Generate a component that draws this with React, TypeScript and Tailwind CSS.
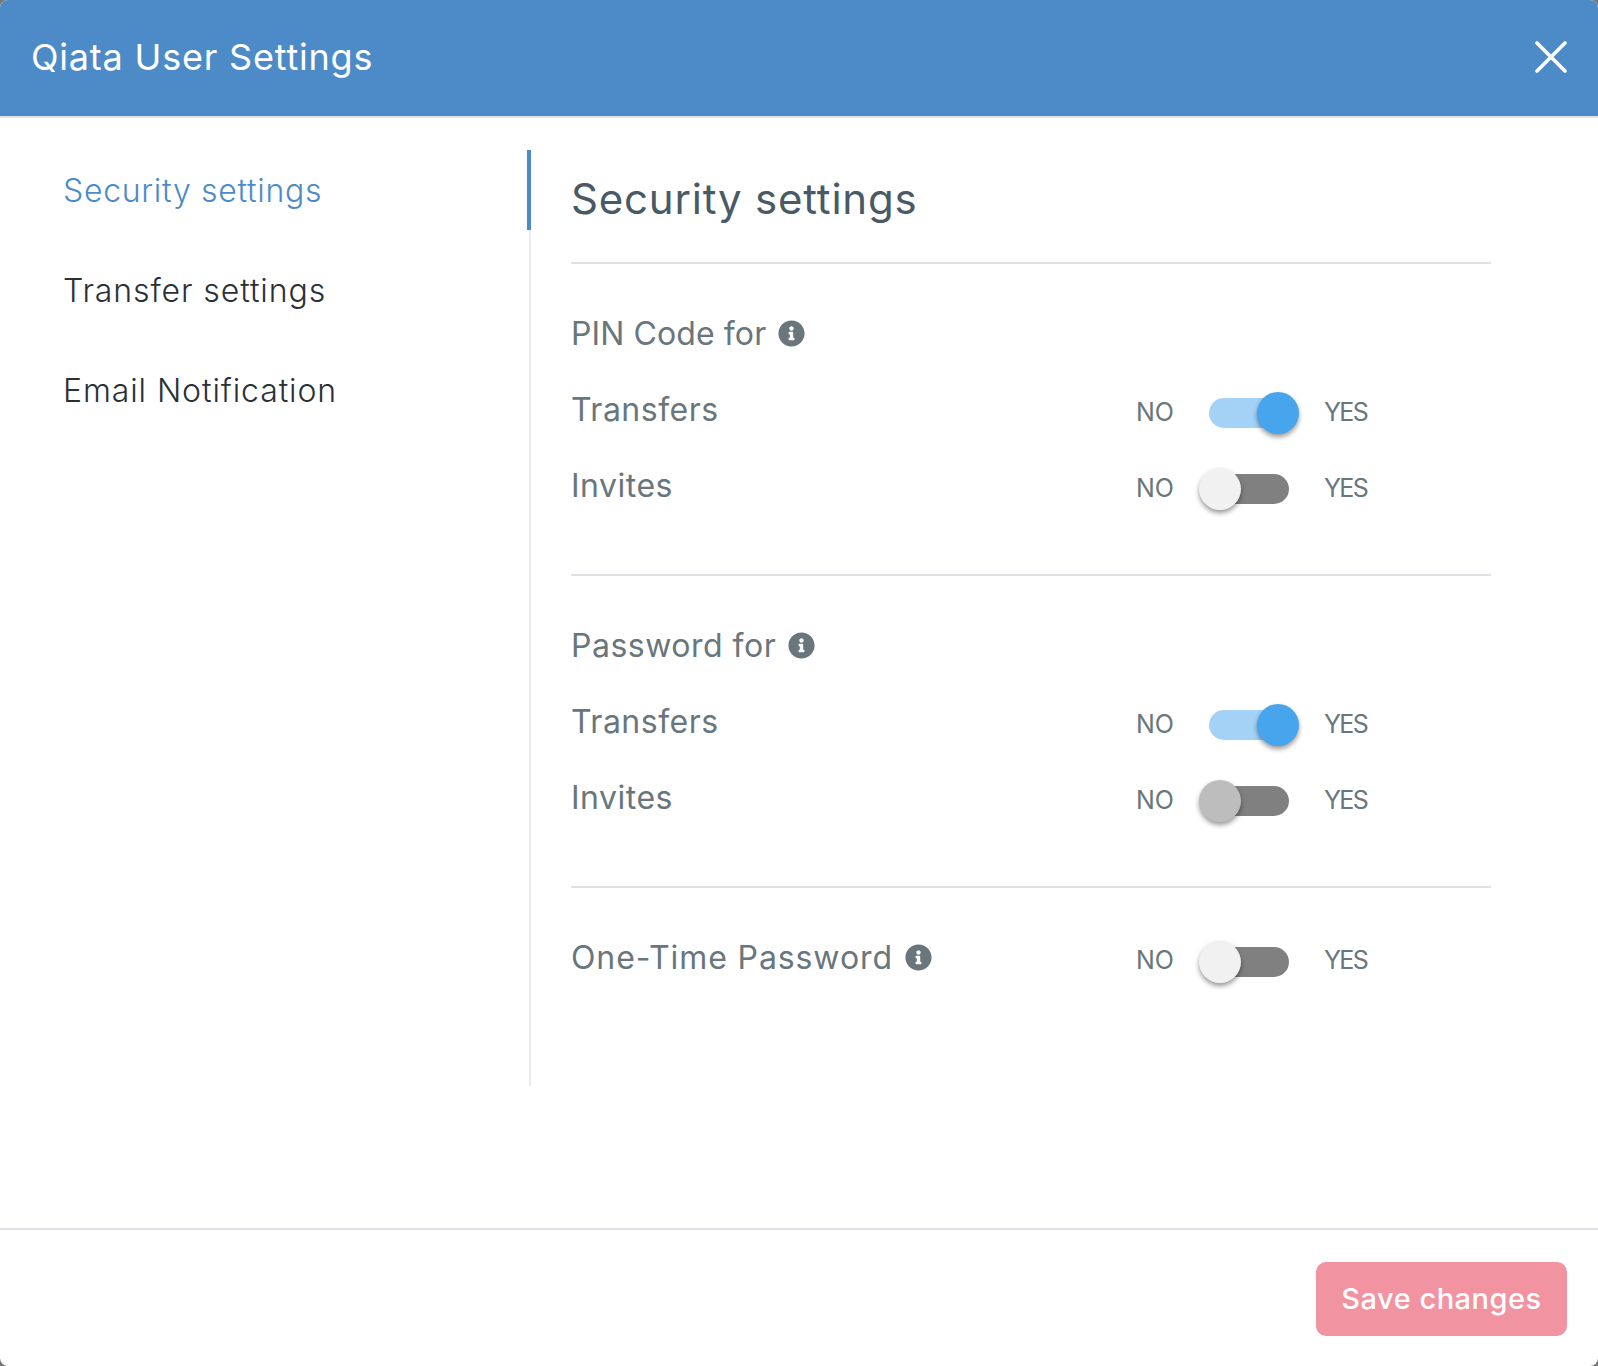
import { FaInfoCircle } from "react-icons/fa";

const font = "font-['Inter','Liberation_Sans',sans-serif]";

function Toggle({ on, dim }: { on?: boolean; dim?: boolean }) {
  return (
    <div className="flex items-center h-[42px] text-[25px] leading-[30px] text-[#69767c]">
      <span className="w-[73px] mt-[-3px] tracking-[-0.1px]">NO</span>
      <div className={`relative w-[80px] h-[30px] rounded-full ${on ? "bg-[#a3d2f6]" : "bg-[#808080]"}`}>
        <div
          className={`absolute top-[-6px] w-[42px] h-[42px] rounded-full shadow-[0_3px_5px_rgba(0,0,0,0.4)] ${
            on ? "left-[48px] bg-[#47a5ee]" : dim ? "left-[-10px] bg-[#bdbdbd]" : "left-[-10px] bg-[#f1f1f1]"
          }`}
        />
      </div>
      <span className="ml-[35px] mt-[-3px] tracking-[-1.6px]">YES</span>
    </div>
  );
}

function Row({ label, on, dim }: { label: string; on?: boolean; dim?: boolean }) {
  return (
    <div className="flex items-center h-[42px]">
      <div className="w-[565px] text-[32px] leading-[42px] tracking-[0.5px] text-[#69767c] font-normal mt-[-7px]">{label}</div>
      <Toggle on={on} dim={dim} />
    </div>
  );
}

function Title({ children, tracking }: { children: string; tracking: string }) {
  return (
    <div className="flex items-center gap-[12px] text-[32px] leading-[36px] text-[#69767c]">
      <span className={tracking}>{children}</span>
      <FaInfoCircle className="w-[27px] h-[27px] mt-[-2px]" />
    </div>
  );
}

function Section({ title, tracking, dim }: { title: string; tracking: string; dim?: boolean }) {
  return (
    <section className="h-[312px] border-t-2 border-[#dee2e6] pt-[52px]">
      <Title tracking={tracking}>{title}</Title>
      <div className="mt-[40px] flex flex-col gap-[34px]">
        <Row label="Transfers" on />
        <Row label="Invites" dim={dim} />
      </div>
    </section>
  );
}

export default function App() {
  return (
    <div className={`w-[1598px] h-[1366px] bg-[#777777] ${font}`}>
      <div className="w-full h-full bg-white rounded-[8px] overflow-hidden flex flex-col">
        <header className="h-[118px] shrink-0 bg-[#4c8bc7] border-b-2 border-[#e3e3e3] flex items-center justify-between pl-[31px] pr-[31px]">
          <h1 className="text-[36px] leading-[44px] tracking-[0.8px] text-white font-normal mt-[-2px]">Qiata User Settings</h1>
          <svg className="mt-[-2px]" width="32" height="32" viewBox="0 0 32 32" fill="none" stroke="white" strokeWidth="3.6" strokeLinecap="round">
            <path d="M2 2L30 30M30 2L2 30" />
          </svg>
        </header>
        <div className="flex h-[1112px] shrink-0 pt-[32px] border-b-2 border-[#dee2e6]">
          <nav className="w-[531px] h-[936px] shrink-0 border-r-2 border-[#e9ecef] text-[32px] font-light text-[#2a3036]">
            <div className="h-[80px] mr-[-2px] border-r-4 border-[#4c8bc7] pl-[63px] pt-[20px] leading-[42px] tracking-[0.7px] text-[#4c8bc7]">Security settings</div>
            <div className="h-[80px] mt-[20px] pl-[63px] pt-[20px] leading-[42px] tracking-[0.9px]">Transfer settings</div>
            <div className="h-[80px] mt-[20px] pl-[63px] pt-[20px] leading-[42px] tracking-[0.9px]">Email Notification</div>
          </nav>
          <main className="w-[920px] ml-[40px] shrink-0">
            <div className="h-[112px] pt-[24px]">
              <h2 className="text-[42px] leading-[50px] tracking-[0.8px] font-normal text-[#495a66]">Security settings</h2>
            </div>
            <Section title="PIN Code for" tracking="tracking-[0.1px]" />
            <Section title="Password for" tracking="tracking-[0.5px]" dim />
            <section className="border-t-2 border-[#dee2e6] pt-[52px]">
              <div className="flex items-center h-[42px] mt-[-3px]">
                <div className="w-[565px]">
                  <Title tracking="tracking-[0.9px]">One-Time Password</Title>
                </div>
                <div className="mt-[7px]"><Toggle /></div>
              </div>
            </section>
          </main>
        </div>
        <footer className="flex-1 flex items-center justify-end pr-[31px] pt-[2px]">
          <button className="w-[251px] h-[74px] rounded-[10px] bg-[#f293a1] text-white text-[29px] tracking-[0.5px] font-medium">Save changes</button>
        </footer>
      </div>
    </div>
  );
}
